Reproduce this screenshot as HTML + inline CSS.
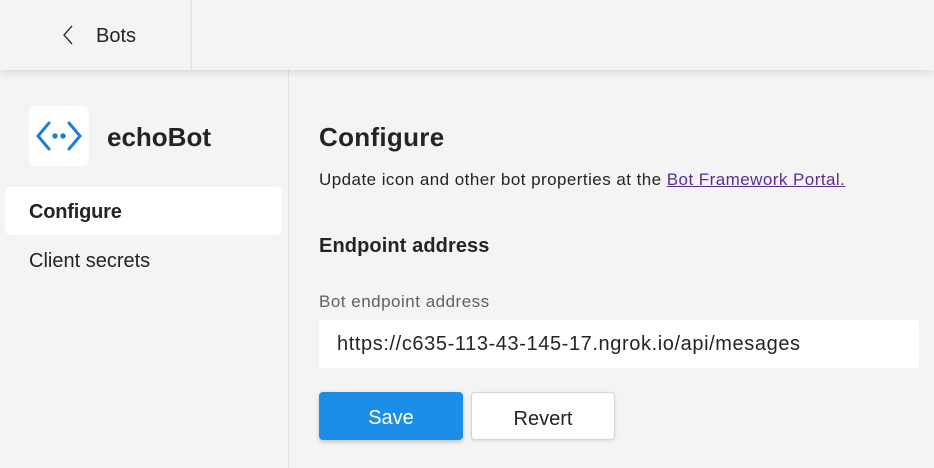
<!DOCTYPE html>
<html><head><style>
*{margin:0;padding:0;box-sizing:border-box}
body{width:934px;height:468px;background:#f4f4f4;font-family:"Liberation Sans",sans-serif;color:#242424;position:relative;overflow:hidden}
.hdr{position:absolute;left:0;top:0;width:934px;height:70px;background:#f4f4f4;box-shadow:0 2px 8px rgba(0,0,0,.12);z-index:2}
.hdr .sep{position:absolute;left:190px;top:0;width:2px;height:70px;background:#e6e6e6}
.hdr .back{position:absolute;left:60px;top:24px}
.hdr .t{position:absolute;left:96px;top:25px;font-size:20px}
.vline{position:absolute;left:288px;top:70px;width:1px;height:398px;background:#e0e0e0}
.logo{position:absolute;left:29px;top:106px;width:60px;height:60px;background:#fff;border-radius:6px}
.name{position:absolute;left:107px;top:122px;font-size:26px;font-weight:bold}
.nav{position:absolute;left:5px;width:277px;height:48px;border-radius:6px;font-size:20px;padding:14px 0 0 24px}
.nav.a{background:#fff;top:187px;font-weight:bold;letter-spacing:-0.2px}
h1{position:absolute;left:319px;top:122px;font-size:26px;letter-spacing:0.3px}
.p{position:absolute;left:319px;top:170px;font-size:17px;letter-spacing:0.45px}
.p a{color:#5c2d91;text-decoration:underline}
h2{position:absolute;left:319px;top:235px;font-size:20px;letter-spacing:0.1px}
.lbl{position:absolute;left:319px;top:292px;font-size:17px;color:#616161;letter-spacing:0.5px}
.inp{position:absolute;left:319px;top:320px;width:600px;height:48px;background:#fff;border-radius:3px;font-size:20px;padding:13px 0 0 18px;letter-spacing:0.6px}
.btn{position:absolute;top:392px;height:48px;border-radius:4px;font-size:20px;text-align:center;padding-top:15px}
.save{left:319px;width:144px;background:#1b8fe8;color:#fff;box-shadow:0 2px 5px rgba(0,0,0,.2)}
.rev{left:471px;width:144px;background:#fff;border:1px solid #d6d6d6;box-shadow:0 1px 3px rgba(0,0,0,.1)}
</style></head><body>
<div class="hdr"><div class="sep"></div>
<svg class="back" width="16" height="22" viewBox="0 0 16 22"><path d="M12 2 L4 11 L12 20" fill="none" stroke="#333" stroke-width="1.4"/></svg>
<div class="t">Bots</div></div>
<div class="vline"></div>
<div class="logo"><svg width="60" height="60" viewBox="0 0 60 60"><path d="M20 17 L9 30 L20 43 M40 17 L51 30 L40 43" fill="none" stroke="#1a7fd4" stroke-width="3" stroke-linecap="round"/><circle cx="26" cy="30" r="2.7" fill="#1a7fd4"/><circle cx="34" cy="30" r="2.7" fill="#1a7fd4"/></svg></div>
<div class="name">echoBot</div>
<div class="nav a">Configure</div>
<div class="nav" style="top:236px">Client secrets</div>
<h1>Configure</h1>
<div class="p">Update icon and other bot properties at the <a>Bot Framework Portal.</a></div>
<h2>Endpoint address</h2>
<div class="lbl">Bot endpoint address</div>
<div class="inp">https://c635-113-43-145-17.ngrok.io/api/mesages</div>
<div class="btn save">Save</div>
<div class="btn rev">Revert</div>
</body></html>
